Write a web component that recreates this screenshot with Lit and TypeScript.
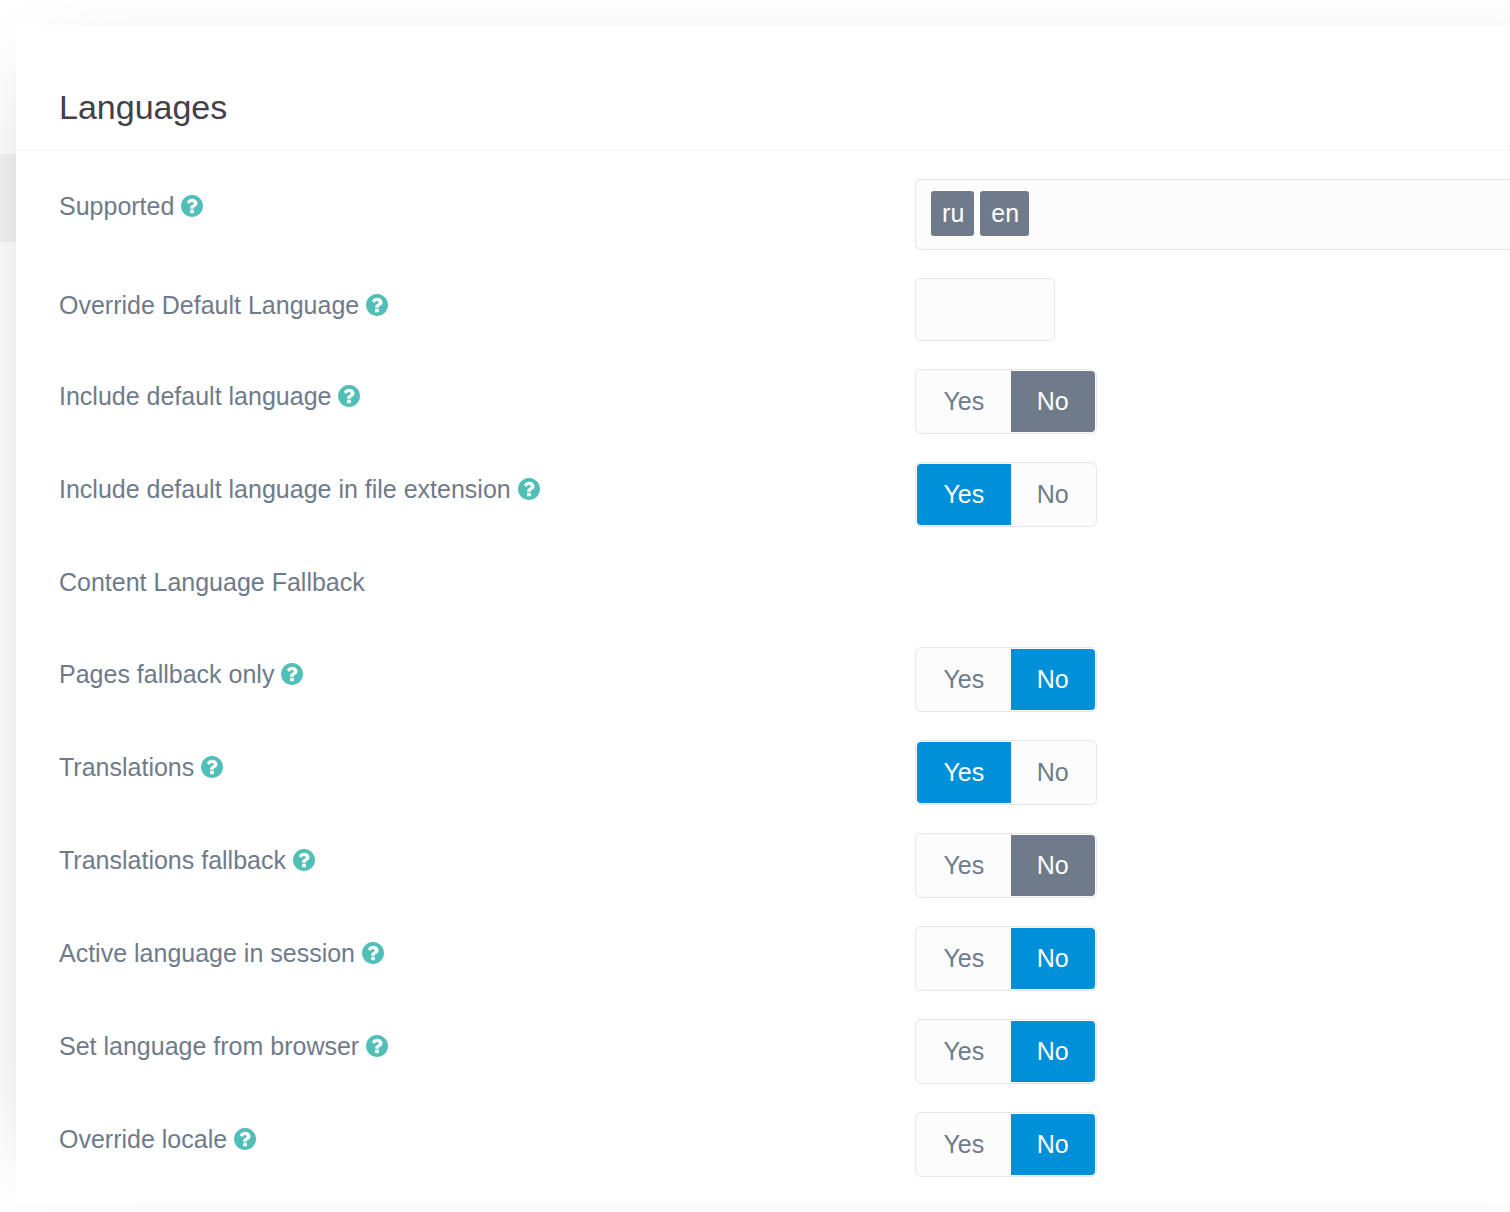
import { LitElement, html, css, svg, nothing } from "lit";
import { customElement, state } from "lit/decorators.js";

type Row =
  | { kind: "tags"; id: string; label: string; tags: string[] }
  | { kind: "text"; id: string; label: string }
  | { kind: "plain"; id: string; label: string }
  | { kind: "toggle"; id: string; label: string; value: "yes" | "no"; preferred: "yes" | "no" };

const rows: Row[] = [
  { kind: "tags", id: "supported", label: "Supported", tags: ["ru", "en"] },
  { kind: "text", id: "override-default", label: "Override Default Language" },
  { kind: "toggle", id: "include-default", label: "Include default language", value: "no", preferred: "yes" },
  { kind: "toggle", id: "include-extension", label: "Include default language in file extension", value: "yes", preferred: "yes" },
  { kind: "plain", id: "content-fallback", label: "Content Language Fallback" },
  { kind: "toggle", id: "pages-fallback", label: "Pages fallback only", value: "no", preferred: "no" },
  { kind: "toggle", id: "translations", label: "Translations", value: "yes", preferred: "yes" },
  { kind: "toggle", id: "translations-fallback", label: "Translations fallback", value: "no", preferred: "yes" },
  { kind: "toggle", id: "session-language", label: "Active language in session", value: "no", preferred: "no" },
  { kind: "toggle", id: "browser-language", label: "Set language from browser", value: "no", preferred: "no" },
  { kind: "toggle", id: "override-locale", label: "Override locale", value: "no", preferred: "no" },
];

const helpIcon = svg`<svg class="help" viewBox="0 0 1536 1536" aria-hidden="true">
  <path d="M896 1248v-192q0-14-9-23t-23-9H672q-14 0-23 9t-9 23v192q0 14 9 23t23 9h192q14 0 23-9t9-23zm256-672q0-88-55.500-163T958 297t-170-41q-243 0-371 213-15 24 8 42l132 100q7 6 19 6 16 0 25-12 53-68 86-92 34-24 86-24 48 0 85.500 26t37.500 59q0 38-20 61t-68 45q-63 28-115.500 86.500T640 892v36q0 14 9 23t23 9h192q14 0 23-9t9-23q0-19 21.500-49.500T972 829q32-18 49-28.500t46-35 44.500-48 28-60.500 12.500-81zm384 192q0 209-103 385.500T1153.500 1433 768 1536t-385.500-103T103 1153.500 0 768t103-385.500T382.500 103 768 0t385.500 103T1433 382.500 1536 768z"/>
</svg>`;

@customElement("app-root")
export class AppRoot extends LitElement {
  static styles = css`
    :host {
      display: block;
      font-family: "Liberation Sans", Arial, sans-serif;
      font-size: 25px;
      color: #6f7b8a;
    }
    .page {
      display: grid;
      grid-template-columns: 16px minmax(0, 1fr);
      padding: 25px 0 8px;
      overflow: hidden;
      background: #fff;
    }
    .rail {
      padding-top: 129px;
    }
    .rail-item {
      height: 88px;
      background: #f3f3f3;
    }
    .card {
      position: relative;
      margin-right: -160px;
      padding: 0 160px 28px 0;
      background: #fff;
      box-shadow: -31px 0 90px -55px rgba(0, 0, 0, 0.2);
    }
    .title {
      margin: 0;
      padding: 62px 43px 22px;
      border-bottom: 1px solid #f3f3f3;
      font-size: 34px;
      line-height: 41px;
      font-weight: 400;
      color: #414147;
    }
    .fields {
      display: grid;
      gap: 28px;
      padding: 28px 0 0 43px;
    }
    .field {
      display: grid;
      grid-template-columns: 59% minmax(0, 1fr);
      align-items: start;
    }
    .caption {
      display: flex;
      align-items: center;
      gap: 7px;
      padding-top: 8px;
      line-height: 38px;
    }
    .caption.lone {
      padding-bottom: 18px;
    }
    .help {
      display: block;
      width: 22px;
      height: 22px;
      fill: #50bfb7;
    }
    .tags {
      box-sizing: border-box;
      display: flex;
      gap: 6px;
      height: 71px;
      padding: 11px 15px;
      border: 1px solid #e6e6e6;
      border-right: 0;
      border-radius: 6px 0 0 6px;
      background: #fcfcfc;
    }
    .tag {
      height: 45px;
      padding: 0 10px 0 11px;
      border-radius: 3px;
      background: #6f7b8a;
      color: #fff;
      line-height: 45px;
    }
    .tag-input {
      flex: 1;
      min-width: 0;
      border: 0;
      background: none;
      font: inherit;
      outline: none;
    }
    .text {
      box-sizing: border-box;
      width: 140px;
      height: 63px;
      padding: 0 15px;
      border: 1px solid #e6e6e6;
      border-radius: 5px;
      background: #fcfcfc;
      color: inherit;
      font: inherit;
    }
    .switch {
      box-sizing: border-box;
      position: relative;
      display: flex;
      justify-self: start;
      min-width: 182px;
      height: 65px;
      padding: 1px;
      border: 1px solid #e6e6e6;
      border-radius: 6px;
      background: #fcfcfc;
      line-height: 61px;
    }
    .option {
      flex: 1 1 auto;
      padding: 0 26px;
      text-align: center;
      cursor: pointer;
    }
    .option:first-of-type {
      border-radius: 4px 0 0 4px;
    }
    .option:last-of-type {
      border-radius: 0 4px 4px 0;
    }
    .radio {
      position: absolute;
      opacity: 0;
      pointer-events: none;
    }
    .radio:checked + .option {
      background: #6f7b8a;
      color: #fff;
    }
    .radio:checked + .option.preferred {
      background: #0090d9;
    }
  `;

  @state() private values: Record<string, string> = Object.fromEntries(
    rows.map((r) => [r.id, r.kind === "toggle" ? r.value : ""])
  );

  private option(row: Extract<Row, { kind: "toggle" }>, value: string, text: string) {
    const id = `${row.id}-${value}`;
    return html`<input
        class="radio"
        type="radio"
        id=${id}
        name=${row.id}
        .checked=${this.values[row.id] === value}
        @change=${() => (this.values = { ...this.values, [row.id]: value })}
      /><label class="option ${row.preferred === value ? "preferred" : ""}" for=${id}>${text}</label>`;
  }

  private control(row: Row) {
    switch (row.kind) {
      case "tags":
        return html`<div class="tags">
          ${row.tags.map((t) => html`<span class="tag">${t}</span>`)}
          <input class="tag-input" id=${row.id} type="text" />
        </div>`;
      case "text":
        return html`<input class="text" id=${row.id} type="text" />`;
      case "toggle":
        return html`<div class="switch" role="radiogroup" aria-labelledby="${row.id}-label">
          ${this.option(row, "yes", "Yes")}${this.option(row, "no", "No")}
        </div>`;
      default:
        return nothing;
    }
  }

  private caption(row: Row) {
    const icon = row.kind === "plain" ? nothing : helpIcon;
    return row.kind === "tags" || row.kind === "text"
      ? html`<label class="caption" for=${row.id}>${row.label}${icon}</label>`
      : html`<div class="caption ${row.kind === "plain" ? "lone" : ""}" id="${row.id}-label">${row.label}${icon}</div>`;
  }

  render() {
    return html`<main class="page">
      <div class="rail"><div class="rail-item"></div></div>
      <form class="card">
        <h1 class="title">Languages</h1>
        <div class="fields">
          ${rows.map((row) => html`<div class="field">${this.caption(row)}${this.control(row)}</div>`)}
        </div>
      </form>
    </main>`;
  }
}
